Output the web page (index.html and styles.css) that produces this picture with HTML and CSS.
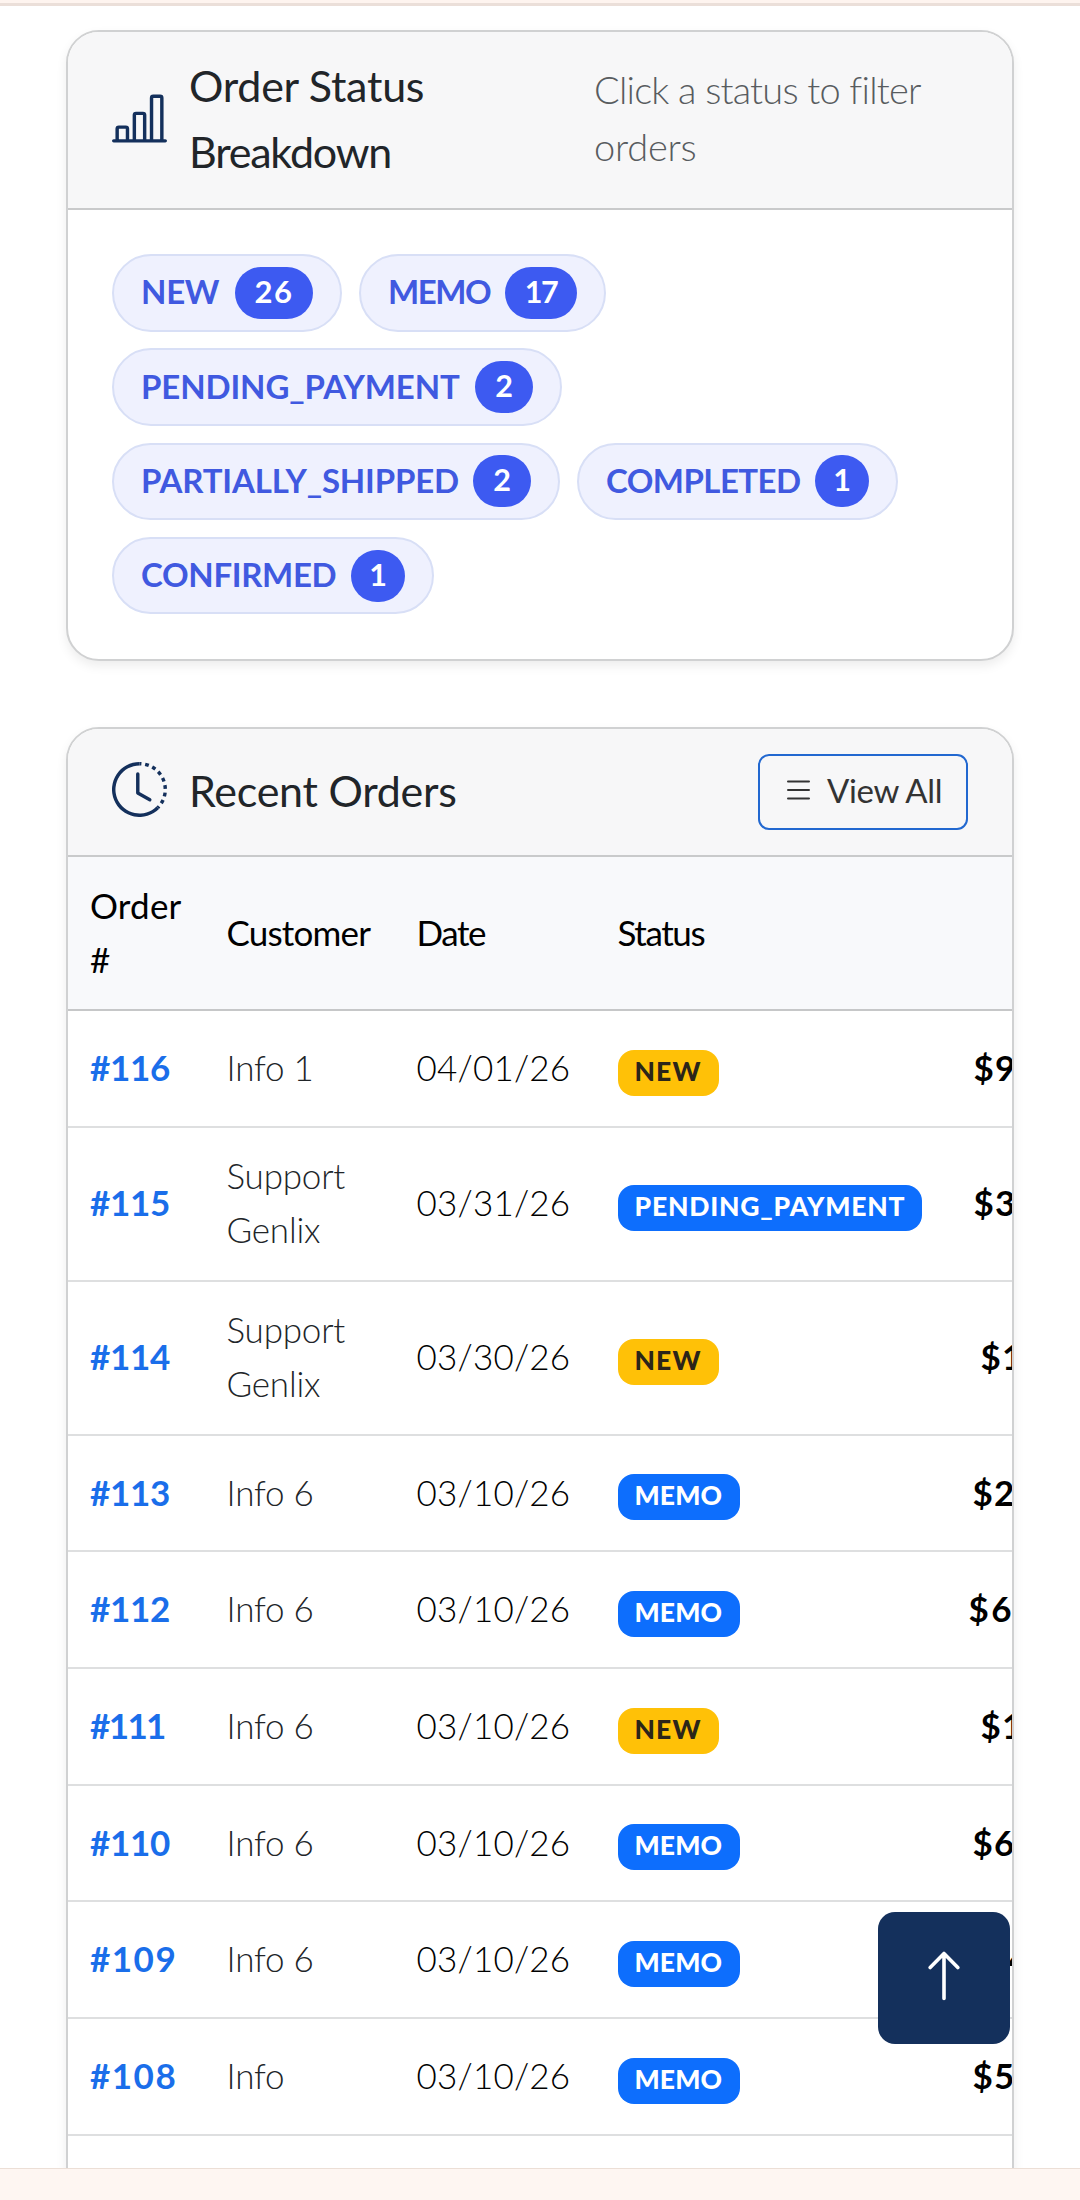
FILE: index.html
```html
<!DOCTYPE html>
<html lang="en">
<head>
<meta charset="utf-8">
<title>Orders dashboard</title>
<link rel="stylesheet" href="styles.css">
</head>
<body>
<div class="page">
  <div class="topbar"></div>
  <main class="content">
    <section class="card">
      <header class="card-header card-header-tall">
        <svg class="icon" viewBox="0 0 16 16" fill="currentColor"><path d="M11 2a1 1 0 0 1 1-1h2a1 1 0 0 1 1 1v12h.5a.5.5 0 0 1 0 1H.5a.5.5 0 0 1 0-1H1v-3a1 1 0 0 1 1-1h2a1 1 0 0 1 1 1v3h1V7a1 1 0 0 1 1-1h2a1 1 0 0 1 1 1v7h1zm1 12h2V2h-2zm-3 0V7H7v7zm-5 0v-3H2v3z"/></svg>
        <h2 class="title">Order Status<br><span class="tight">Breakdown</span></h2>
        <p class="hint">Click a status to filter <span class="hint-end">orders</span></p>
      </header>
      <div class="chips">
        <a class="chip chip-new">NEW<span class="count">26</span></a>
        <a class="chip chip-memo">MEMO<span class="count">17</span></a>
        <a class="chip chip-pending">PENDING_PAYMENT<span class="count">2</span></a>
        <a class="chip chip-partial">PARTIALLY_SHIPPED<span class="count">2</span></a>
        <a class="chip chip-completed">COMPLETED<span class="count">1</span></a>
        <a class="chip chip-confirmed">CONFIRMED<span class="count">1</span></a>
      </div>
    </section>

    <section class="card card-orders">
      <header class="card-header">
        <svg class="icon icon-clock" viewBox="0 0 16 16" fill="currentColor"><path d="M8.515 1.019A7 7 0 0 0 8 1V0a8 8 0 0 1 .589.022zm2.004.45a7 7 0 0 0-.985-.299l.219-.976q.576.129 1.126.342zm1.37.71a7 7 0 0 0-.439-.27l.493-.87a8 8 0 0 1 .979.654l-.615.789a7 7 0 0 0-.418-.302zm1.834 1.79a7 7 0 0 0-.653-.796l.724-.69q.406.429.747.91zm.744 1.352a7 7 0 0 0-.214-.468l.893-.45a8 8 0 0 1 .45 1.088l-.95.313a7 7 0 0 0-.179-.483m.53 2.507a7 7 0 0 0-.1-1.025l.985-.17q.1.58.116 1.17zm-.131 1.538q.05-.254.081-.51l.993.123a8 8 0 0 1-.23 1.155l-.964-.267q.069-.247.12-.501m-.952 2.379q.276-.436.486-.908l.914.405q-.24.54-.555 1.038zm-.964 1.205q.183-.183.35-.378l.758.653a8 8 0 0 1-.401.432z"/><path d="M8 1a7 7 0 1 0 4.95 11.95l.707.707A8.001 8.001 0 1 1 8 0z"/><path d="M7.5 3a.5.5 0 0 1 .5.5v5.21l3.248 1.856a.5.5 0 0 1-.496.868l-3.5-2A.5.5 0 0 1 7 9V3.5a.5.5 0 0 1 .5-.5"/></svg>
        <h2 class="title">Recent Orders</h2>
        <a class="view-all"><svg class="list-icon" viewBox="0 0 23 20" stroke="currentColor" stroke-width="2" stroke-linecap="round"><path d="M1 1.5h21M1 10h21M1 18.5h21"/></svg>View All</a>
      </header>
      <div class="table">
        <div class="row row-head"><div>Order<br>#</div><div class="th-customer">Customer</div><div class="th-short">Date</div><div class="th-short">Status</div><div></div></div>
        <div class="row"><a class="num ones">#116</a><div class="cust">Info 1</div><div>04/01/26</div><div><span class="badge warn">NEW</span></div><div class="price">$9</div></div>
        <div class="row row-tall"><a class="num ones">#115</a><div class="cust">Support<br>Genlix</div><div>03/31/26</div><div><span class="badge wide">PENDING_PAYMENT</span></div><div class="price">$3</div></div>
        <div class="row row-tall"><a class="num ones">#114</a><div class="cust">Support<br>Genlix</div><div>03/30/26</div><div><span class="badge warn">NEW</span></div><div class="price p-one">$1</div></div>
        <div class="row"><a class="num ones">#113</a><div class="cust">Info 6</div><div>03/10/26</div><div><span class="badge">MEMO</span></div><div class="price p-mid">$2</div></div>
        <div class="row"><a class="num ones">#112</a><div class="cust">Info 6</div><div>03/10/26</div><div><span class="badge">MEMO</span></div><div class="price p-wide">$6</div></div>
        <div class="row"><a class="num elevens">#111</a><div class="cust">Info 6</div><div>03/10/26</div><div><span class="badge warn">NEW</span></div><div class="price p-one">$1</div></div>
        <div class="row"><a class="num ones">#110</a><div class="cust">Info 6</div><div>03/10/26</div><div><span class="badge">MEMO</span></div><div class="price p-mid">$6</div></div>
        <div class="row"><a class="num">#109</a><div class="cust">Info 6</div><div>03/10/26</div><div><span class="badge">MEMO</span></div><div class="price p-narrow">$4</div></div>
        <div class="row"><a class="num">#108</a><div class="cust">Info</div><div>03/10/26</div><div><span class="badge">MEMO</span></div><div class="price p-mid">$5</div></div>
        <div class="row"></div>
      </div>
    </section>
  </main>
  <div class="bottombar"></div>
  <a class="to-top"><svg class="arrow" viewBox="0 0 32 50" fill="none" stroke="currentColor" stroke-width="3.6" stroke-linecap="round" stroke-linejoin="round"><path d="M16 47.5V2.5M2.2 16.5L16 2.5l13.8 14"/></svg></a>
</div>
</body>
</html>
```
FILE: styles.css
```css
* { box-sizing: border-box; }

body {
  margin: 0;
  background: #fff;
  font-family: "Lato", sans-serif;
  font-weight: 300;
  color: #212529;
}

.page {
  position: relative;
  display: flex;
  flex-direction: column;
  height: 2200px;
  overflow: hidden;
}

.topbar {
  flex: none;
  height: 6px;
  background: #fef4ef;
  border-bottom: 3px solid #ebdfd9;
}

.content {
  flex: 1;
  min-height: 0;
  overflow: hidden;
  padding: 24px 66px 0;
}

.bottombar {
  flex: none;
  height: 32px;
  background: #fef6f2;
  border-top: 1px solid #ecdfd6;
}

.card {
  width: 948px;
  height: 631px;
  overflow: hidden;
  border: 2px solid #d0d1d2;
  border-radius: 33px;
  background: #fff;
  box-shadow: 0 5px 11px rgba(0, 0, 0, .075);
}

.card-orders {
  height: 1600px;
  margin-top: 66px;
}

.card-header {
  display: flex;
  align-items: center;
  height: 128px;
  padding: 0 44px;
  background: #f7f7f8;
  border-bottom: 2px solid #c9cacb;
}

.card-header-tall { height: 178px; }

.icon {
  flex: none;
  width: 55px;
  height: 55px;
  margin: 0 22px 3px 0;
  color: #14305c;
}

.icon-clock { margin-bottom: 6px; }

.title {
  flex: none;
  width: 405px;
  margin: 0 0 2px;
  font-size: 43px;
  font-weight: 400;
  line-height: 66px;
  letter-spacing: -.25px;
}

.tight { letter-spacing: -1.2px; }

.hint {
  width: 380px;
  margin: 0 0 4px;
  font-size: 38px;
  line-height: 56.7px;
  letter-spacing: -.8px;
  color: #585c5f;
}

.hint-end { letter-spacing: -.2px; }

.view-all {
  display: flex;
  align-items: center;
  flex: none;
  width: 210px;
  height: 76px;
  margin-left: auto;
  padding: 0 0 4px 27px;
  border: 2px solid #2268d0;
  border-radius: 11px;
  font-size: 33px;
  font-weight: 400;
  letter-spacing: -.35px;
  color: #333;
}

.list-icon {
  width: 23px;
  height: 20px;
  margin-right: 17px;
}

.chips {
  display: flex;
  flex-wrap: wrap;
  gap: 16.8px 17px;
  padding: 44px;
}

.chip {
  display: flex;
  align-items: center;
  height: 77.5px;
  padding: 0 27px 3px;
  border: 2px solid #d8dff6;
  border-radius: 39px;
  background: #eff1fe;
  font-size: 33px;
  font-weight: 700;
  line-height: 70px;
  color: #4059e0;
}

.count {
  display: flex;
  justify-content: center;
  width: 58px;
  height: 52px;
  margin: 3px 0 0 auto;
  border-radius: 26px;
  background: #3d5af1;
  font-size: 30.5px;
  line-height: 49px;
  letter-spacing: 0;
  color: #fff;
}

.chip-new { width: 230px; letter-spacing: -.3px; }
.chip-new .count { width: 78px; font-size: 31px; letter-spacing: 1.5px; }
.chip-memo { width: 247px; letter-spacing: -1.45px; }
.chip-memo .count { width: 72px; letter-spacing: -1.5px; }
.chip-pending { width: 450px; letter-spacing: -.12px; }
.chip-partial { width: 448px; letter-spacing: -.18px; }
.chip-completed { width: 321px; letter-spacing: -.56px; }
.chip-confirmed { width: 322px; letter-spacing: -.34px; }
.chip-completed .count,
.chip-confirmed .count { width: 54px; }

.row {
  display: grid;
  grid-template-columns: 136.5px 190px 201px 355px 300px;
  align-items: center;
  width: 1182.5px;
  height: 116.67px;
  padding: 0 0 2.4px 22px;
  border-bottom: 2px solid #dedfe0;
  font-size: 35px;
  line-height: 54px;
  letter-spacing: .2px;
  color: #000;
}

.row-tall { height: 154px; }

.row-head {
  height: 154px;
  background: #f8f9fb;
  border-bottom-color: #c6c7c8;
  font-weight: 400;
}

.th-customer { letter-spacing: -.8px; }
.th-short { letter-spacing: -1.4px; }

.num {
  font-weight: 700;
  letter-spacing: 1.5px;
  color: #1a6eea;
}

.ones { letter-spacing: -.3px; }
.elevens { letter-spacing: -1.6px; }

.cust {
  letter-spacing: -.2px;
  color: #212529;
}

.badge {
  display: block;
  width: 122px;
  height: 46px;
  margin-top: 11px;
  padding-left: 17px;
  border-radius: 16px;
  background: #0d6efd;
  font-size: 26.5px;
  font-weight: 900;
  line-height: 43px;
  letter-spacing: .1px;
  color: #fff;
}

.badge.wide { width: 304px; letter-spacing: .8px; }

.badge.warn {
  width: 101px;
  background: #ffc107;
  letter-spacing: 1.1px;
  color: #2b2519;
}

.price {
  padding-left: 1px;
  font-weight: 700;
  letter-spacing: 1.2px;
}

.p-one { padding-left: 8px; }
.p-mid { padding-left: 0; }
.p-wide { margin-left: -4px; padding-left: 0; letter-spacing: 2.4px; }
.p-narrow { padding-left: 14px; }

.to-top {
  position: absolute;
  left: 878px;
  top: 1912px;
  display: flex;
  align-items: center;
  justify-content: center;
  width: 132px;
  height: 132px;
  padding-bottom: 4px;
  border-radius: 17px;
  background: #14305c;
  color: #fff;
}

.arrow {
  width: 32px;
  height: 50px;
}
```
